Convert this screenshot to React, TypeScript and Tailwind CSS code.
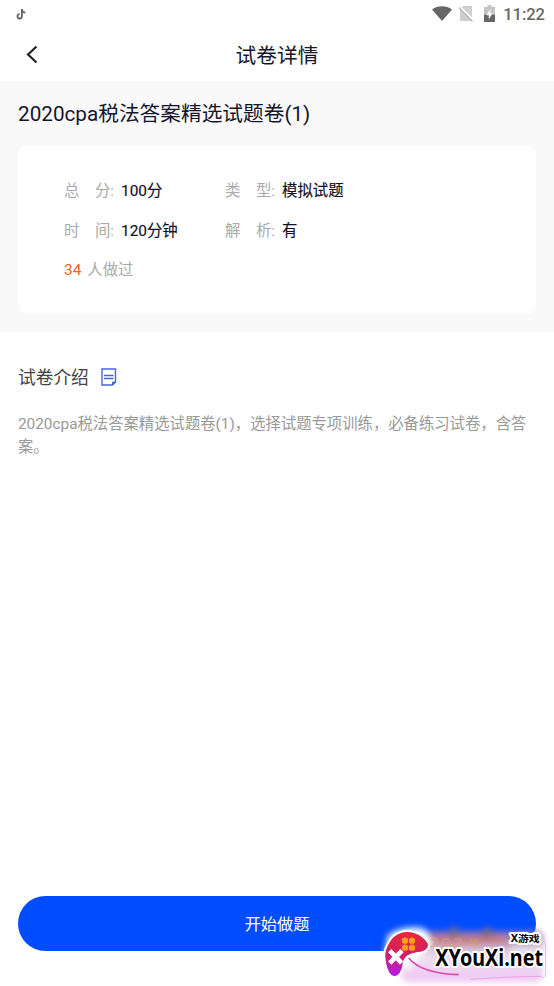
type Detail = { label: [string, string]; value: string };

const details: Detail[][] = [
  [
    { label: ["总", "分:"], value: "100分" },
    { label: ["类", "型:"], value: "模拟试题" },
  ],
  [
    { label: ["时", "间:"], value: "120分钟" },
    { label: ["解", "析:"], value: "有" },
  ],
];

function StatusBar() {
  return (
    <div className="flex h-7 items-center justify-between pr-[9px] pl-[16px]">
      <svg width="10" height="11" viewBox="0 0 10 11" fill="none" className="mt-px">
        <path d="M5.9 0v7.3a2.2 2.2 0 1 1-2.3-2.2M6 .8c.3 1.8 1.4 2.7 3.3 2.7" stroke="#666" strokeWidth="1.8" />
      </svg>
      <div className="flex items-center">
        <svg width="20" height="15" viewBox="0 0 20 15" fill="#666" className="-mt-px">
          <path d="M0 3.4C5.8-.9 14.2-.9 20 3.4L10 15z" />
        </svg>
        <svg width="14" height="16" viewBox="0 0 14 16" className="ml-[7px]">
          <path d="M4 0h9v15H1V3z" fill="#cfcfcf" />
          <path d="M0 0l14 14" stroke="#fff" strokeWidth="2.5" />
          <path d="M0 1.500l13.500 14" stroke="#b5b5b5" strokeWidth="1.2" />
        </svg>
        <svg width="11" height="17" viewBox="0 0 11 17" className="-mt-px ml-[11px]">
          <path d="M3.5 0h4v2H11v7.500H0V2h3.500z" fill="#c4c4c4" />
          <path d="M0 9.500h11V17H0z" fill="#666" />
          <path d="M6.300 4L2.500 10.300h2.300V14.500L8.500 8.300H6.300z" fill="#fff" />
        </svg>
        <span className="mt-[2px] ml-[8px] text-[16.500px] leading-5 font-medium text-[#666]">11:22</span>
      </div>
    </div>
  );
}

function DetailItem({ label, value }: Detail) {
  return (
    <div className="flex w-[161px] items-center">
      <span className="flex w-[50px] justify-between text-[#aaa]">
        <span>{label[0]}</span>
        <span>{label[1]}</span>
      </span>
      <span className="ml-[7px] whitespace-nowrap text-[#101024] [-webkit-text-stroke:0.15px_#101024]">{value}</span>
    </div>
  );
}

function SiteBadge() {
  return (
    <div className="absolute right-0 bottom-0 h-[96px] w-[190px]">
      <svg width="190" height="96" viewBox="0 0 570 288">
        <defs>
          <linearGradient id="pad" x1="0" y1="0" x2="0" y2="1">
            <stop offset="0" stopColor="#e12a3c" />
            <stop offset=".45" stopColor="#d51f5e" />
            <stop offset="1" stopColor="#b21de8" />
          </linearGradient>
          <linearGradient id="glow" x1="0" y1="0" x2="0" y2="1">
            <stop offset="0" stopColor="#8c6cb0" />
            <stop offset=".25" stopColor="#c49ab4" />
            <stop offset=".5" stopColor="#eee2f0" />
            <stop offset="1" stopColor="#f0c4f4" />
          </linearGradient>
          <filter id="soft" x="-20%" y="-30%" width="140%" height="160%">
            <feGaussianBlur stdDeviation="10" />
          </filter>
        </defs>
        <g filter="url(#soft)">
          <rect x="112" y="124" width="425" height="152" rx="20" fill="url(#glow)" />
          <path d="M72 136q45-32 110-20l24 44-76 80-68-44z" fill="#fff" />
          <circle cx="270" cy="126" r="16" fill="#6f6a90" />
          <circle cx="370" cy="128" r="16" fill="#7b6b80" />
          <path d="M200 148h225" stroke="#c4746f" strokeWidth="14" />
          <path d="M440 168h105v22H440z" fill="#e4e3ee" />
        </g>
        <g fill="none" stroke="#d9a184" strokeWidth="6" opacity=".5">
          <path d="M202 148q22-8 18 8l-18 14h22" />
          <ellipse cx="246" cy="158" rx="11" ry="12" />
          <path d="M272 148q22-8 18 8l-18 14h22" />
          <path d="M318 147l22 20M340 147l-22 20" stroke="#e2a04c" />
        </g>
        <path d="M134 204c28 34 78 48 150 50" fill="none" stroke="#d94cae" strokeWidth="5" />
        <path d="M320 268q100-8 212-9" fill="none" stroke="#e9a4e8" strokeWidth="3" />
        <path d="M532 145q13 8 13 28v74q0 15-12 16" fill="none" stroke="#dbc7df" strokeWidth="3" />
        <path
          d="M92 139c17-13 39-16 60-9 18 6 31 17 39 30 4 13-6 23-22 25-20 2-36 6-46 18-9 11-6 27-13 40-8 17-23 20-33 6-6-12-11-24-12-39-2-14-2-27 5-40 6-12 11-22 22-31z"
          fill="url(#pad)"
          stroke="#fff"
          strokeWidth="12"
          strokeLinejoin="round"
          paintOrder="stroke"
        />
        <path d="M82 187l26 27M109 187l-27 27" stroke="#fff" strokeWidth="14" strokeLinecap="square" />
        <g fill="#ff9d18">
          <circle cx="123" cy="152" r="9.500" />
          <circle cx="144" cy="152" r="9.500" />
          <circle cx="123" cy="173" r="9.500" />
          <circle cx="144" cy="173" r="9.500" />
        </g>
        <g fill="#000" stroke="#fff" strokeLinejoin="round" paintOrder="stroke" fontWeight="700">
          <text
            x="440"
            y="155"
            fontSize="29"
            strokeWidth="12"
            textLength="87"
            lengthAdjust="spacingAndGlyphs"
            fontFamily='"Noto Sans", "Noto Sans CJK SC", sans-serif'
          >
            X游戏
          </text>
          <text
            x="214"
            y="228"
            fontSize="70"
            strokeWidth="12"
            textLength="323"
            lengthAdjust="spacingAndGlyphs"
            fontFamily='"Noto Sans", sans-serif'
          >
            XYouXi.net
          </text>
        </g>
      </svg>
    </div>
  );
}

export default function App() {
  return (
    <div className="relative flex h-[986px] w-[554px] flex-col overflow-hidden bg-white font-[Roboto,'Noto_Sans_CJK_SC',sans-serif]">
      <StatusBar />
      <header className="relative flex h-[53px] items-center justify-center pt-[2px]">
        <button aria-label="返回" className="absolute left-[26px] top-[17px]">
          <svg width="13" height="19" viewBox="0 0 13 19" fill="none">
            <path d="M10.500 1.500L2 9.500l8.500 8" stroke="#222" strokeWidth="2.200" />
          </svg>
        </button>
        <h1 className="text-[20.700px] leading-7 text-[#15152b]">试卷详情</h1>
      </header>

      <section className="h-[251px] bg-[#f9f9f9] px-[18px] pt-[19px]">
        <h2 className="text-[20.700px] leading-7 text-[#15152b]">2020cpa税法答案精选试题卷(1)</h2>
        <div className="mt-[17px] flex h-[169px] flex-col rounded-[10px] bg-white pt-[27px] pl-[46px] text-[15.400px] leading-[39.500px]">
          {details.map((row) => (
            <div key={row[0].value} className="flex">
              {row.map((item) => (
                <DetailItem key={item.value} {...item} />
              ))}
            </div>
          ))}
          <p className="text-[#aaa]">
            <span className="mr-[6px] text-[#f0602f]">34</span>人做过
          </p>
        </div>
      </section>

      <section className="flex-1 px-[18px] pt-[32px]">
        <div className="flex items-center">
          <h3 className="text-[17.700px] leading-7 text-[#444]">试卷介绍</h3>
          <svg width="16" height="18" viewBox="0 0 16 18" fill="none" stroke="#4467d8" className="-mt-[2px] ml-[12px]">
            <path d="M1 1h13.500v13L11.500 17H1z" strokeWidth="1.400" />
            <path d="M3 7.500h9.500M3 10.500h9.500" strokeWidth="1.400" />
            <path d="M11.500 17v-3h3z" fill="#4467d8" />
          </svg>
        </div>
        <p className="-mr-[4px] mt-[21px] text-[15.350px] leading-[23px] text-[#999]">
          2020cpa税法答案精选试题卷(1)，选择试题专项训练，必备练习试卷，含答
          <br />
          案。
        </p>
      </section>

      <button className="mx-[18px] mb-[35px] h-[55px] rounded-full bg-[#004cff] pt-[3px] text-[16.200px] text-white">
        开始做题
      </button>
      <SiteBadge />
    </div>
  );
}
